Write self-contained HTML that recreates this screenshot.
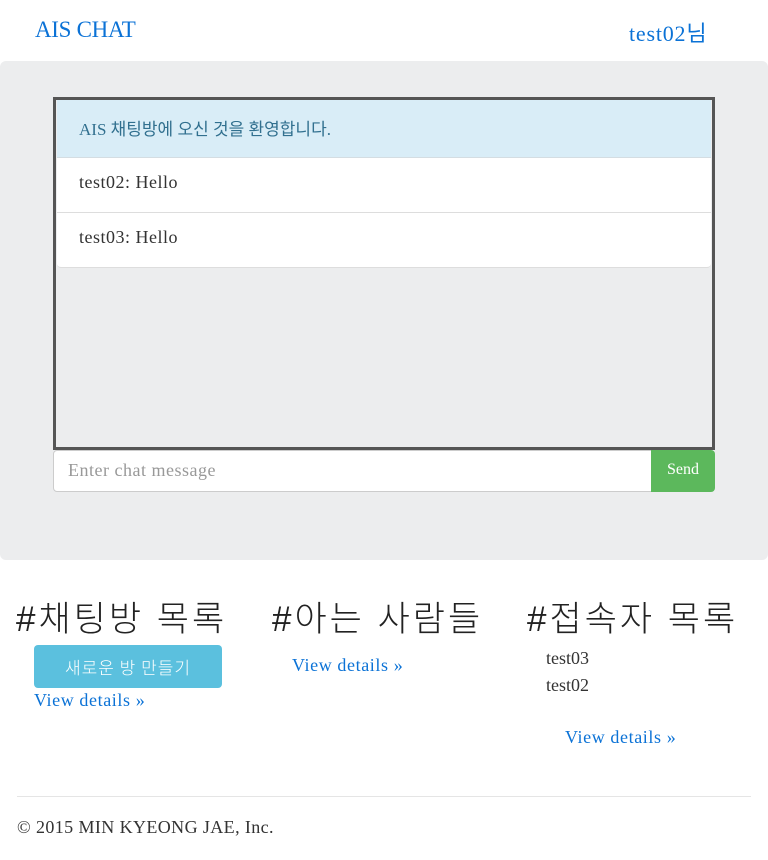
<!DOCTYPE html>
<html><head><meta charset="utf-8"><style>
*{box-sizing:border-box;margin:0;padding:0}
body{width:768px;height:860px;background:#fff;font-family:"Liberation Serif","Noto Serif CJK SC",serif;color:#333;position:relative;overflow:hidden}
.a{position:absolute;white-space:nowrap}
.blue{color:#0b72d6}
.h{font-family:"Liberation Sans","Noto Sans CJK KR",sans-serif;font-size:35px;color:#222;top:591px;letter-spacing:3px;font-weight:300}
.kr{font-family:"Liberation Serif","Noto Sans CJK KR",serif}
.vd{font-size:18px;letter-spacing:0.6px}
</style></head><body>
<div class="a blue" style="left:35px;top:17px;font-size:23px;letter-spacing:-0.3px">AIS CHAT</div>
<div class="a blue kr" style="left:629px;top:16px;font-size:22px;letter-spacing:0.8px">test02님</div>
<div class="a" style="left:0;top:61px;width:768px;height:499px;background:#ecedee;border-radius:6px"></div>
<div class="a" style="left:53px;top:97px;width:662px;height:353px;border:3px solid #555;background:#ecedee">
 <div style="position:absolute;left:1px;top:0;width:654px;height:58px;background:#d9edf7;border-bottom:1px solid #d4dde2;color:#31708f;font-size:17px;padding:15px 22px" class="kr">AIS 채팅방에 오신 것을 환영합니다.</div>
 <div style="position:absolute;left:1px;top:58px;width:654px;height:55px;background:#fff;border-bottom:1px solid #ddd;font-size:18px;letter-spacing:0.5px;padding:14px 22px">test02: Hello</div>
 <div style="position:absolute;left:1px;top:113px;width:654px;height:55px;background:#fff;border-bottom:1px solid #ddd;font-size:18px;letter-spacing:0.5px;padding:14px 22px;border-radius:0 0 4px 4px">test03: Hello</div>
</div>
<div class="a" style="left:53px;top:450px;width:599px;height:42px;background:#fff;border:1px solid #ccc;border-radius:4px 0 0 4px;color:#999;font-size:18px;letter-spacing:0.5px;padding:9px 14px">Enter chat message</div>
<div class="a" style="left:651px;top:450px;width:64px;height:42px;background:#5cb85c;border-radius:0 4px 4px 0;color:#fff;font-size:16px;text-align:center;padding-top:11px">Send</div>
<div class="a h" style="left:16px">#채팅방 목록</div>
<div class="a h" style="left:272px">#아는 사람들</div>
<div class="a h" style="left:527px">#접속자 목록</div>
<div class="a" style="left:34px;top:645px;width:188px;height:43px;background:#5bc0de;border-radius:4px;color:#fff;font-family:'Noto Sans CJK KR',sans-serif;font-size:17px;letter-spacing:1px;text-align:center;padding-top:9px;font-weight:300">새로운 방 만들기</div>
<div class="a blue vd" style="left:34px;top:690px">View details »</div>
<div class="a blue vd" style="left:292px;top:655px">View details »</div>
<div class="a" style="left:546px;top:648px;font-size:18px">test03</div>
<div class="a" style="left:546px;top:675px;font-size:18px">test02</div>
<div class="a blue vd" style="left:565px;top:727px">View details »</div>
<div class="a" style="left:17px;top:796px;width:734px;border-top:1px solid #e5e5e5"></div>
<div class="a" style="left:17px;top:817px;font-size:18px;letter-spacing:0.4px">© 2015 MIN KYEONG JAE, Inc.</div>
</body></html>
